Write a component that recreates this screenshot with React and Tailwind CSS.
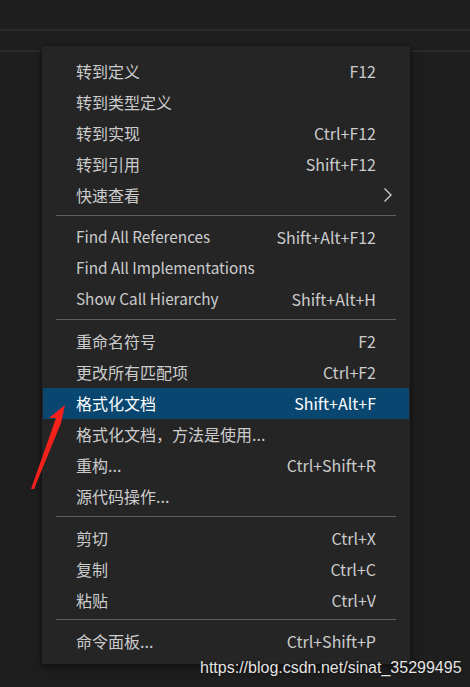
import React from "react";

const groups = [
  [
    { label: "转到定义", key: "F12" },
    { label: "转到类型定义" },
    { label: "转到实现", key: "Ctrl+F12" },
    { label: "转到引用", key: "Shift+F12" },
    { label: "快速查看", sub: true },
  ],
  [
    { label: "Find All References", key: "Shift+Alt+F12", latin: true },
    { label: "Find All Implementations", latin: true },
    { label: "Show Call Hierarchy", key: "Shift+Alt+H", latin: true },
  ],
  [
    { label: "重命名符号", key: "F2" },
    { label: "更改所有匹配项", key: "Ctrl+F2" },
    { label: "格式化文档", key: "Shift+Alt+F", active: true },
    { label: "格式化文档，方法是使用..." },
    { label: "重构...", key: "Ctrl+Shift+R" },
    { label: "源代码操作..." },
  ],
  [
    { label: "剪切", key: "Ctrl+X" },
    { label: "复制", key: "Ctrl+C" },
    { label: "粘贴", key: "Ctrl+V" },
  ],
  [{ label: "命令面板...", key: "Ctrl+Shift+P" }],
];

const sepClass = ["", "h-[11px] pt-[4px]", "h-[11px] pt-[4px]", "h-[11px] pt-[4px]", "h-[10px] pt-[3px]"];

function Row({ item }) {
  return (
    <div
      className={
        "mx-[1px] h-[31px] flex items-center pl-[33px] pr-[33px] pb-[2px] " +
        (item.active ? "bg-[#094771] text-white" : "text-[#cccccc]")
      }
    >
      <span className={"flex-1 whitespace-nowrap " + (item.latin ? "text-[15.3px]" : "")}>{item.label}</span>
      {item.key && <span className="whitespace-nowrap">{item.key}</span>}
      {item.sub && (
        <svg width="10" height="16" viewBox="0 0 10 16" className="-mr-[17px]">
          <polyline points="1.5,1.5 8,8 1.5,14.5" fill="none" stroke="#cccccc" strokeWidth="1.4" />
        </svg>
      )}
    </div>
  );
}

export default function App() {
  return (
    <div
      className="relative w-[470px] h-[687px] bg-[#1e1e1e] overflow-hidden"
      style={{ fontFamily: '"Noto Sans CJK SC", sans-serif' }}
    >
      <div className="h-[29px]" />
      <div className="h-[2px] bg-[#2a2a2a]" />
      <div className="h-[19px] bg-[#1f1f1f]" />
      <div className="h-[2px] bg-[#2a2a2a]" />

      <div className="absolute left-[42px] top-[46px] w-[368px] bg-[#252526] pt-[10px] pb-[7px] text-[16px] leading-none shadow-[0_2px_8px_rgba(0,0,0,0.6)]">
        {groups.map((g, gi) => (
          <div key={gi}>
            {gi > 0 && (
              <div className={sepClass[gi] + " px-[14px]"}>
                <div className="h-[1px] bg-[#5f5f5f]" />
              </div>
            )}
            {g.map((item, ii) => (
              <Row key={ii} item={item} />
            ))}
          </div>
        ))}
      </div>

      <svg className="absolute left-0 top-0" width="470" height="687" viewBox="0 0 470 687">
        <polygon points="65,405 49,418 56,418 31,489 34,489 61,423" fill="#f5211b" />
      </svg>

      <div
        className="absolute left-[200px] top-[659px] text-[16px] leading-[18px] text-[#e4e4e4] whitespace-nowrap"
        style={{ fontFamily: '"Liberation Sans", Arial, sans-serif', textShadow: "0 0 2px rgba(0,0,0,0.8)" }}
      >
        https://blog.csdn.net/sinat_35299495
      </div>
    </div>
  );
}
